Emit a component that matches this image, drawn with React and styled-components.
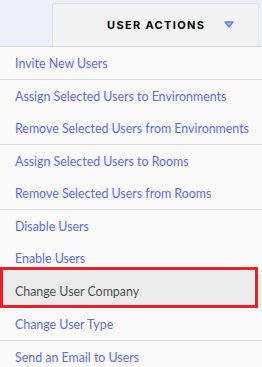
import React from 'react'
import styled, { createGlobalStyle } from 'styled-components'

const GlobalStyle = createGlobalStyle`
  html, body {
    margin: 0;
    padding: 0;
    background: #fafafa;
  }
  body {
    font-family: Lato, "Liberation Sans", sans-serif;
  }
`

const Page = styled.div`
  width: 262px;
  min-height: 367px;
  background: #fafafa;
  overflow: hidden;
`

const TopBar = styled.div`
  display: flex;
  height: 47px;
  padding: 3px 3px 0 52px;
  box-sizing: border-box;
  background: #edf1f7;
  border-bottom: 1px solid #d9d9d9;
`

const ActionsButton = styled.button`
  flex: 1;
  display: grid;
  grid-template-columns: 1fr auto 1fr;
  align-items: center;
  margin: 0;
  padding: 0;
  background: #f3f3f3;
  border: 1px solid #d9def2;
  border-bottom: none;
  border-right-color: #e6e8ee;
  border-radius: 3px 3px 0 0;
  cursor: pointer;
`

const ActionsLabel = styled.span`
  grid-column: 2;
  font-family: Inter, "Liberation Sans", sans-serif;
  font-size: 11px;
  font-weight: 700;
  letter-spacing: 1.35px;
  color: #000;
  margin-right: -1.35px;
  margin-top: -1px;
`

const Caret = styled.svg`
  grid-column: 3;
  justify-self: start;
  margin-left: 20px;
  margin-top: -2px;
`

const Menu = styled.div`
  display: flex;
  flex-direction: column;
`

const Group = styled.div`
  display: flex;
  flex-direction: column;
  border-bottom: 1px solid #dcdcdc;

  &:last-child {
    border-bottom: none;
  }
`

const Item = styled.div`
  position: relative;
  display: flex;
  align-items: center;
  height: ${(p) => (p.$active ? '34px' : '32px')};
  padding-left: 15px;
  font-size: 12.4px;
  color: ${(p) => (p.$active ? '#505050' : '#5b6cf4')};
  background: ${(p) => (p.$active ? '#ececec' : 'transparent')};
  cursor: pointer;

  ${(p) =>
    p.$active &&
    `
    &::after {
      content: '';
      position: absolute;
      top: -7px;
      left: 0;
      right: 4px;
      bottom: 0;
      border: 3px solid #e8202a;
      pointer-events: none;
    }
    &::before {
      content: '';
      position: absolute;
      top: -7px;
      left: 0;
      right: 4px;
      height: 7px;
      background: #ececec;
    }
  `}
`

const groups = [
  ['Invite New Users'],
  ['Assign Selected Users to Environments', 'Remove Selected Users from Environments'],
  ['Assign Selected Users to Rooms', 'Remove Selected Users from Rooms'],
  ['Disable Users', 'Enable Users', 'Change User Company', 'Change User Type'],
  ['Send an Email to Users'],
]

export default function App() {
  return (
    <Page>
      <GlobalStyle />
      <TopBar>
        <ActionsButton>
          <ActionsLabel>USER ACTIONS</ActionsLabel>
          <Caret width="10" height="7" viewBox="0 0 10 7">
            <polygon points="1,1 9,1 5,6" fill="#a9b5f7" stroke="#6a7ef2" strokeWidth="1.4" strokeLinejoin="round" />
          </Caret>
        </ActionsButton>
      </TopBar>
      <Menu>
        {groups.map((g, i) => (
          <Group key={i}>
            {g.map((label) => (
              <Item key={label} $active={label === 'Change User Company'}>
                {label}
              </Item>
            ))}
          </Group>
        ))}
      </Menu>
    </Page>
  )
}
